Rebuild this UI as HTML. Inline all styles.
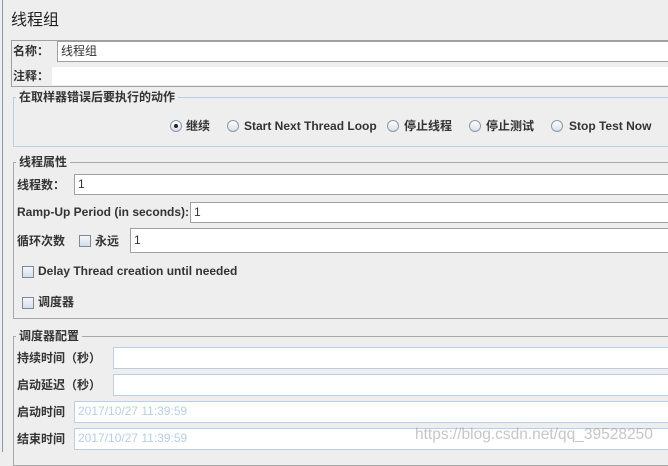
<!DOCTYPE html>
<html><head><meta charset="utf-8"><style>
*{margin:0;padding:0;box-sizing:border-box}
html,body{width:668px;height:452px}
body{background:#eeeeee;position:relative;overflow:hidden;font-family:"Liberation Sans","Noto Sans CJK SC",sans-serif;font-size:12px;color:#333;font-weight:bold}
.a{position:absolute;white-space:nowrap;line-height:14px}
.in{position:absolute;background:#fff;border:1px solid #a0a0a0;font-weight:normal;color:#333;padding-left:3px;line-height:19px;font-size:12px}
.in.b{border-color:#b8cfe5}
.dis{color:#b8cfe5}
.grp{position:absolute;border:1px solid #a8a8a8}
.lg{position:absolute;background:#eeeeee;padding:0 3px;font-size:12px;line-height:14px}
.rd{position:absolute;width:12px;height:12px;border-radius:50%;border:1px solid #8a98a8;background:linear-gradient(#fff,#d8e0ea)}
.rd.on::after{content:"";position:absolute;left:3px;top:3px;width:4px;height:4px;border-radius:50%;background:#222}
.cb{position:absolute;width:12px;height:12px;border:1px solid #7a8a9c;background:linear-gradient(#f4f7fa,#d4dde8)}
</style></head><body>
<div class="a" style="left:2px;top:0;width:1px;height:452px;background:#8a9aac"></div>
<div class="a" style="left:11px;top:12px;font-size:16px;line-height:18px;font-weight:normal;color:#222">线程组</div>
<div class="grp" style="left:11px;top:40px;width:670px;height:47px;border-color:#a0a0a0"></div>
<div class="a" style="left:13px;top:44px">名称：</div>
<div class="in" style="left:57px;top:41px;width:620px;height:21px">线程组</div>
<div class="a" style="left:13px;top:69px">注释：</div>
<div class="in" style="left:52px;top:67px;width:620px;height:18px;border:none"></div>

<div class="grp" style="left:13px;top:97px;width:670px;height:50px;border-color:#b8cfe5"></div>
<div class="lg" style="left:16px;top:90px">在取样器错误后要执行的动作</div>
<div class="rd on" style="left:170px;top:120px"></div><div class="a" style="left:186px;top:119px">继续</div>
<div class="rd" style="left:227px;top:120px"></div><div class="a" style="left:244px;top:119px">Start Next Thread Loop</div>
<div class="rd" style="left:387px;top:120px"></div><div class="a" style="left:404px;top:119px">停止线程</div>
<div class="rd" style="left:469px;top:120px"></div><div class="a" style="left:486px;top:119px">停止测试</div>
<div class="rd" style="left:551px;top:120px"></div><div class="a" style="left:569px;top:119px">Stop Test Now</div>

<div class="grp" style="left:13px;top:162px;width:670px;height:157px"></div>
<div class="lg" style="left:16px;top:155px">线程属性</div>
<div class="a" style="left:17px;top:178px">线程数：</div>
<div class="in" style="left:74px;top:174px;width:610px;height:21px">1</div>
<div class="a" style="left:17px;top:205px">Ramp-Up Period (in seconds):</div>
<div class="in" style="left:190px;top:202px;width:490px;height:21px">1</div>
<div class="a" style="left:17px;top:234px">循环次数</div>
<div class="cb" style="left:79px;top:235px"></div><div class="a" style="left:95px;top:234px">永远</div>
<div class="in" style="left:130px;top:228px;width:550px;height:25px;line-height:23px">1</div>
<div class="cb" style="left:22px;top:266px"></div><div class="a" style="left:38px;top:264px">Delay Thread creation until needed</div>
<div class="cb" style="left:22px;top:297px"></div><div class="a" style="left:38px;top:295px">调度器</div>

<div class="grp" style="left:13px;top:336px;width:670px;height:130px"></div>
<div class="lg" style="left:16px;top:329px">调度器配置</div>
<div class="a" style="left:17px;top:351px">持续时间（秒）</div>
<div class="in b" style="left:113px;top:347px;width:570px;height:22px"></div>
<div class="a" style="left:17px;top:378px">启动延迟（秒）</div>
<div class="in b" style="left:113px;top:374px;width:570px;height:22px"></div>
<div class="a" style="left:17px;top:405px">启动时间</div>
<div class="in b dis" style="left:74px;top:401px;width:610px;height:22px">2017/10/27 11:39:59</div>
<div class="a" style="left:17px;top:432px">结束时间</div>
<div class="in b dis" style="left:74px;top:428px;width:610px;height:22px">2017/10/27 11:39:59</div>
<div class="a" style="left:415px;top:426px;font-size:15.5px;line-height:18px;font-weight:normal;color:rgba(160,160,160,0.6)">https://blog.csdn.net/qq_39528250</div>
</body></html>
